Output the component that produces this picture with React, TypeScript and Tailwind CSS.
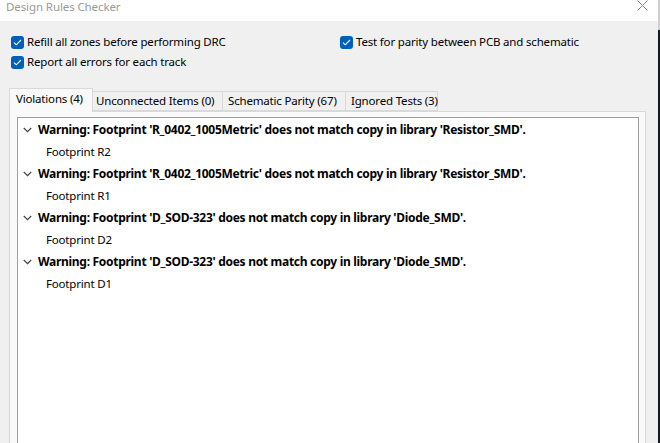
import React from "react";

const Check = ({ label }: { label: string }) => (
  <div className="flex items-center h-[20px]">
    <div className="w-[13px] h-[13px] rounded-[3px] bg-[#005fb8] flex items-center justify-center shrink-0">
      <svg width="9" height="7" viewBox="0 0 9 7">
        <path d="M1 3.6 L3.3 5.8 L8 1" fill="none" stroke="white" strokeWidth="1.1" />
      </svg>
    </div>
    <span className="ml-[3px] text-[11.5px] tracking-[-0.18px] text-black whitespace-nowrap">{label}</span>
  </div>
);

const items = [
  { w: "Warning: Footprint 'R_0402_1005Metric' does not match copy in library 'Resistor_SMD'.", c: "Footprint R2" },
  { w: "Warning: Footprint 'R_0402_1005Metric' does not match copy in library 'Resistor_SMD'.", c: "Footprint R1" },
  { w: "Warning: Footprint 'D_SOD-323' does not match copy in library 'Diode_SMD'.", c: "Footprint D2" },
  { w: "Warning: Footprint 'D_SOD-323' does not match copy in library 'Diode_SMD'.", c: "Footprint D1" },
];

const tabText = "text-[11.5px] tracking-[-0.18px] whitespace-nowrap shrink-0";

export default function App() {
  return (
    <div className="w-[660px] h-[443px] overflow-hidden flex bg-[#f0f0f0] font-['Segoe_UI','Noto_Sans',sans-serif] text-black">
      <div className="flex-1 flex flex-col min-w-0">
        <div className="h-[21px] bg-white flex items-start justify-between shrink-0">
          <span className="ml-[6px] mt-0 text-[11.5px] tracking-[-0.1px] leading-[14px] text-[#9a9a9a]">Design Rules Checker</span>
          <svg className="mr-[10px]" width="11" height="11" viewBox="0 0 11 11">
            <path d="M0.5 0.5 L10.5 10.5 M10.5 0.5 L0.5 10.5" stroke="#8a8a8a" strokeWidth="1" fill="none" />
          </svg>
        </div>
        <div className="grid grid-cols-[329px_1fr] pl-[11px] pt-[11px] shrink-0">
          <Check label="Refill all zones before performing DRC" />
          <Check label="Test for parity between PCB and schematic" />
          <Check label="Report all errors for each track" />
          <div />
        </div>
        <div className="flex items-end pl-[9px] mt-[15px] h-[24px] shrink-0">
          <div className={`w-[84px] h-[24px] pl-[6px] bg-[#f9f9f9] border border-b-0 border-[#d9d9d9] flex items-center pb-[3px] relative z-10 -mb-px ${tabText}`}>
            Violations (4)
          </div>
          <div className={`w-[130px] h-[20px] pl-[3px] border border-l-0 border-[#d9d9d9] flex items-center ${tabText}`}>Unconnected Items (0)</div>
          <div className={`w-[123px] h-[20px] pl-[5px] border border-l-0 border-[#d9d9d9] flex items-center ${tabText}`}>Schematic Parity (67)</div>
          <div className={`w-[92px] h-[20px] pl-[5px] border border-l-0 border-[#d9d9d9] flex items-center ${tabText}`}>Ignored Tests (3)</div>
        </div>
        <div className="flex-1 ml-[9px] mr-[12px] bg-[#f9f9f9] border border-b-0 border-[#d9d9d9] pt-[5px] pl-[7px] pr-[6px] flex">
          <div className="flex-1 bg-white border border-b-0 border-[#a0a0a0] pt-[1px]">
            {items.map((it, i) => (
              <div key={i}>
                <div className="h-[22px] flex items-center">
                  <svg className="ml-[5px] mr-[6px]" width="9" height="6" viewBox="0 0 9 6">
                    <path d="M0.8 1 L4.5 4.7 L8.2 1" fill="none" stroke="#444" strokeWidth="1.2" />
                  </svg>
                  <span className="text-[12px] tracking-[-0.29px] font-bold whitespace-nowrap">{it.w}</span>
                </div>
                <div className={`h-[22px] flex items-center pl-[28px] ${tabText}`}>{it.c}</div>
              </div>
            ))}
          </div>
        </div>
      </div>
      <div className="w-[2px] flex flex-col shrink-0">
        <div className="h-[30px] bg-[#cfcfcf]" />
        <div className="flex-1 bg-[#101c2e]" />
      </div>
    </div>
  );
}
